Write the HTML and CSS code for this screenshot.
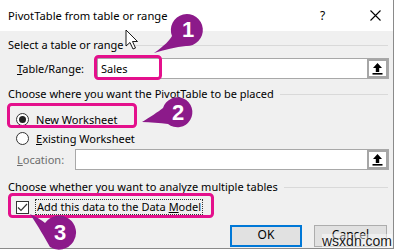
FILE: index.html
```html
<!DOCTYPE html>
<html>
<head>
<meta charset="utf-8">
<link rel="stylesheet" href="styles.css">
</head>
<body>
<div class="dialog">
  <div class="titlebar">
    <span class="title">PivotTable from table or range</span>
    <span class="help">?</span>
    <svg class="close" width="11" height="11" viewBox="0 0 11 11"><path d="M0.5 0.5L10.5 10.5M10.5 0.5L0.5 10.5" stroke="#000" stroke-width="1.1"/></svg>
  </div>
  <div class="content">
    <div class="group-head"><span>Select a table or range</span><i class="rule"></i></div>
    <div class="field-row">
      <label class="lbl lbl-range"><u>T</u>able/Range:</label>
      <div class="input"><span class="value">Sales</span>
        <span class="pick"><svg width="13" height="13" viewBox="0 0 13 13"><path d="M6.5 1L11 6H8.2V10H4.8V6H2Z" fill="#000"/><rect x="1.5" y="11" width="10" height="1.6" fill="#000"/></svg></span>
      </div>
    </div>
    <div class="group-head group-2"><span>Choose where you want the PivotTable to be placed</span><i class="rule"></i></div>
    <div class="option opt-new"><span class="radio checked"></span><span><u>N</u>ew Worksheet</span></div>
    <div class="option opt-existing"><span class="radio"></span><span><u>E</u>xisting Worksheet</span></div>
    <div class="field-row loc-row">
      <label class="lbl lbl-loc disabled"><u>L</u>ocation:</label>
      <div class="input"><span class="value"></span>
        <span class="pick"><svg width="13" height="13" viewBox="0 0 13 13"><path d="M6.5 1L11 6H8.2V10H4.8V6H2Z" fill="#000"/><rect x="1.5" y="11" width="10" height="1.6" fill="#000"/></svg></span>
      </div>
    </div>
    <div class="group-head group-3"><span>Choose whether you want to analyze multiple tables</span><i class="rule"></i></div>
    <div class="option opt-check">
      <span class="check"><svg width="11" height="11" viewBox="0 0 11 11"><path d="M1 5.5L4 8.5L10 2" fill="none" stroke="#333" stroke-width="1.2"/></svg></span>
      <span class="focus">Add this data to the Data <u>M</u>odel</span>
    </div>
    <div class="buttons">
      <span class="btn btn-ok">OK</span>
      <span class="btn btn-cancel">Cancel</span>
    </div>
  </div>
</div>
<svg class="overlay" width="396" height="252" viewBox="0 0 396 252">
  <rect x="95.5" y="56.5" width="65" height="22" rx="3" fill="none" stroke="#e4108c" stroke-width="3"/>
  <rect x="8.5" y="104.5" width="127" height="22" rx="3" fill="none" stroke="#e4108c" stroke-width="3"/>
  <rect x="9.5" y="194.5" width="203" height="22" rx="3" fill="none" stroke="#e4108c" stroke-width="3"/>
  <path d="M154 53 C164 46 170 40 172 36 A16 16 0 1 1 186 46 C176 47 164 50 154 53Z" fill="#8c1a8a"/>
  <path d="M142 122 C150 117 158 112 163 108 A15 15 0 1 1 168 124 C160 123 150 122 142 122Z" fill="#8c1a8a"/>
  <path d="M30 214 C38 218 42 220 45 223 A17 17 0 1 1 50 247 C45 238 38 226 30 214Z" fill="#8c1a8a"/>
  <path d="M126 30 L126 46 L130 42.5 L133 49 L135.5 48 L132.5 41.5 L137.5 41.5 Z" fill="#fff" stroke="#000" stroke-width="0.9" stroke-linejoin="round"/>
</svg>
<span class="num num-1">1</span>
<span class="num num-2">2</span>
<span class="num num-3">3</span>
<span class="watermark">wsxdn.com</span>
</body>
</html>
```
FILE: styles.css
```css
* { box-sizing: border-box; }
html, body { margin: 0; padding: 0; }
body {
  width: 396px;
  height: 252px;
  background: #ffffff;
  font-family: "Noto Sans", "Open Sans", sans-serif;
  font-size: 11px;
  color: #000;
  position: relative;
  overflow: hidden;
}
.dialog {
  width: 394px;
  height: 249px;
  background: #f0f0f0;
  border-right: 1px solid #8a8a8a;
  border-bottom: 1px solid #8a8a8a;
  display: flex;
  flex-direction: column;
}
.titlebar {
  height: 31px;
  background: #fff;
  display: flex;
  align-items: center;
  padding-left: 8px;
  flex: none;
}
.title { flex: 1; font-size: 11.2px; }
.help { width: 12px; margin-right: 38px; font-size: 12px; }
.close { margin-right: 12px; }
.content {
  padding: 6px 4px 0 8px;
  display: flex;
  flex-direction: column;
}
.group-head {
  height: 16px;
  display: flex;
  align-items: center;
  gap: 6px;
  line-height: 16px;
  padding-right: 1px;
}
.group-head .rule { flex: 1; height: 1px; background: #d9d9d9; }
.group-2 { margin-top: 7px; }
.group-3 { margin-top: 9px; }
.field-row {
  display: flex;
  align-items: center;
  margin-top: 5px;
  padding-left: 9px;
}
.loc-row { margin-top: 2px; }
.lbl { flex: none; }
.lbl-range { width: 80px; }
.lbl-loc { width: 58px; }
.disabled { color: #6d6d6d; }
.input {
  flex: 1;
  height: 21px;
  background: #fff;
  border: 1px solid #a8a8a8;
  display: flex;
  align-items: center;
  justify-content: space-between;
}
.value { padding-left: 3px; }
.pick {
  width: 21px;
  height: 19px;
  border: 2px solid #a6a6a6;
  display: flex;
  align-items: center;
  justify-content: center;
  background: #fff;
}
.option {
  display: flex;
  align-items: center;
  height: 18px;
  padding-left: 8px;
  gap: 7px;
}
.opt-new { margin-top: 8px; }
.opt-existing { margin-top: 1px; }
.opt-check { margin-top: 3px; gap: 6px; }
.radio {
  width: 13px;
  height: 13px;
  border-radius: 50%;
  border: 1px solid #333;
  background: #fff;
  display: flex;
  align-items: center;
  justify-content: center;
}
.radio.checked::after {
  content: "";
  width: 7px;
  height: 7px;
  border-radius: 50%;
  background: #222;
}
.check {
  width: 13px;
  height: 13px;
  border: 1px solid #333;
  background: #fff;
  display: flex;
  align-items: center;
  justify-content: center;
}
.focus {
  border: 1px dotted #333;
  padding: 0 1px;
  line-height: 14px;
}
.buttons {
  display: flex;
  justify-content: flex-end;
  gap: 12px;
  margin-top: 9px;
  padding-right: 2px;
}
.btn {
  height: 22px;
  background: #e1e1e1;
  border: 1px solid #adadad;
  display: flex;
  align-items: center;
  justify-content: center;
  font-size: 12px;
  padding-bottom: 3px;
}
.btn-ok { width: 72px; border: 2px solid #0078d7; }
.btn-cancel { width: 73px; }
.overlay { position: absolute; left: 0; top: 0; pointer-events: none; }
.num {
  position: absolute;
  color: #fff;
  font-family: "Liberation Sans", Arial, sans-serif;
  font-weight: bold;
  font-size: 22px;
  line-height: 22px;
  width: 20px;
  text-align: center;
}
.num-1 { left: 178px; top: 19px; }
.num-2 { left: 168px; top: 102px; }
.num-3 { left: 50px; top: 222px; }
.watermark {
  position: absolute;
  left: 322px;
  top: 234px;
  line-height: 14px;
  font-family: "Liberation Sans", Arial, sans-serif;
  font-size: 14px;
  color: #1a1a1a;
  background: rgba(255, 255, 255, 0.45);
  text-shadow: 0 0 2px #fff;
}
```
